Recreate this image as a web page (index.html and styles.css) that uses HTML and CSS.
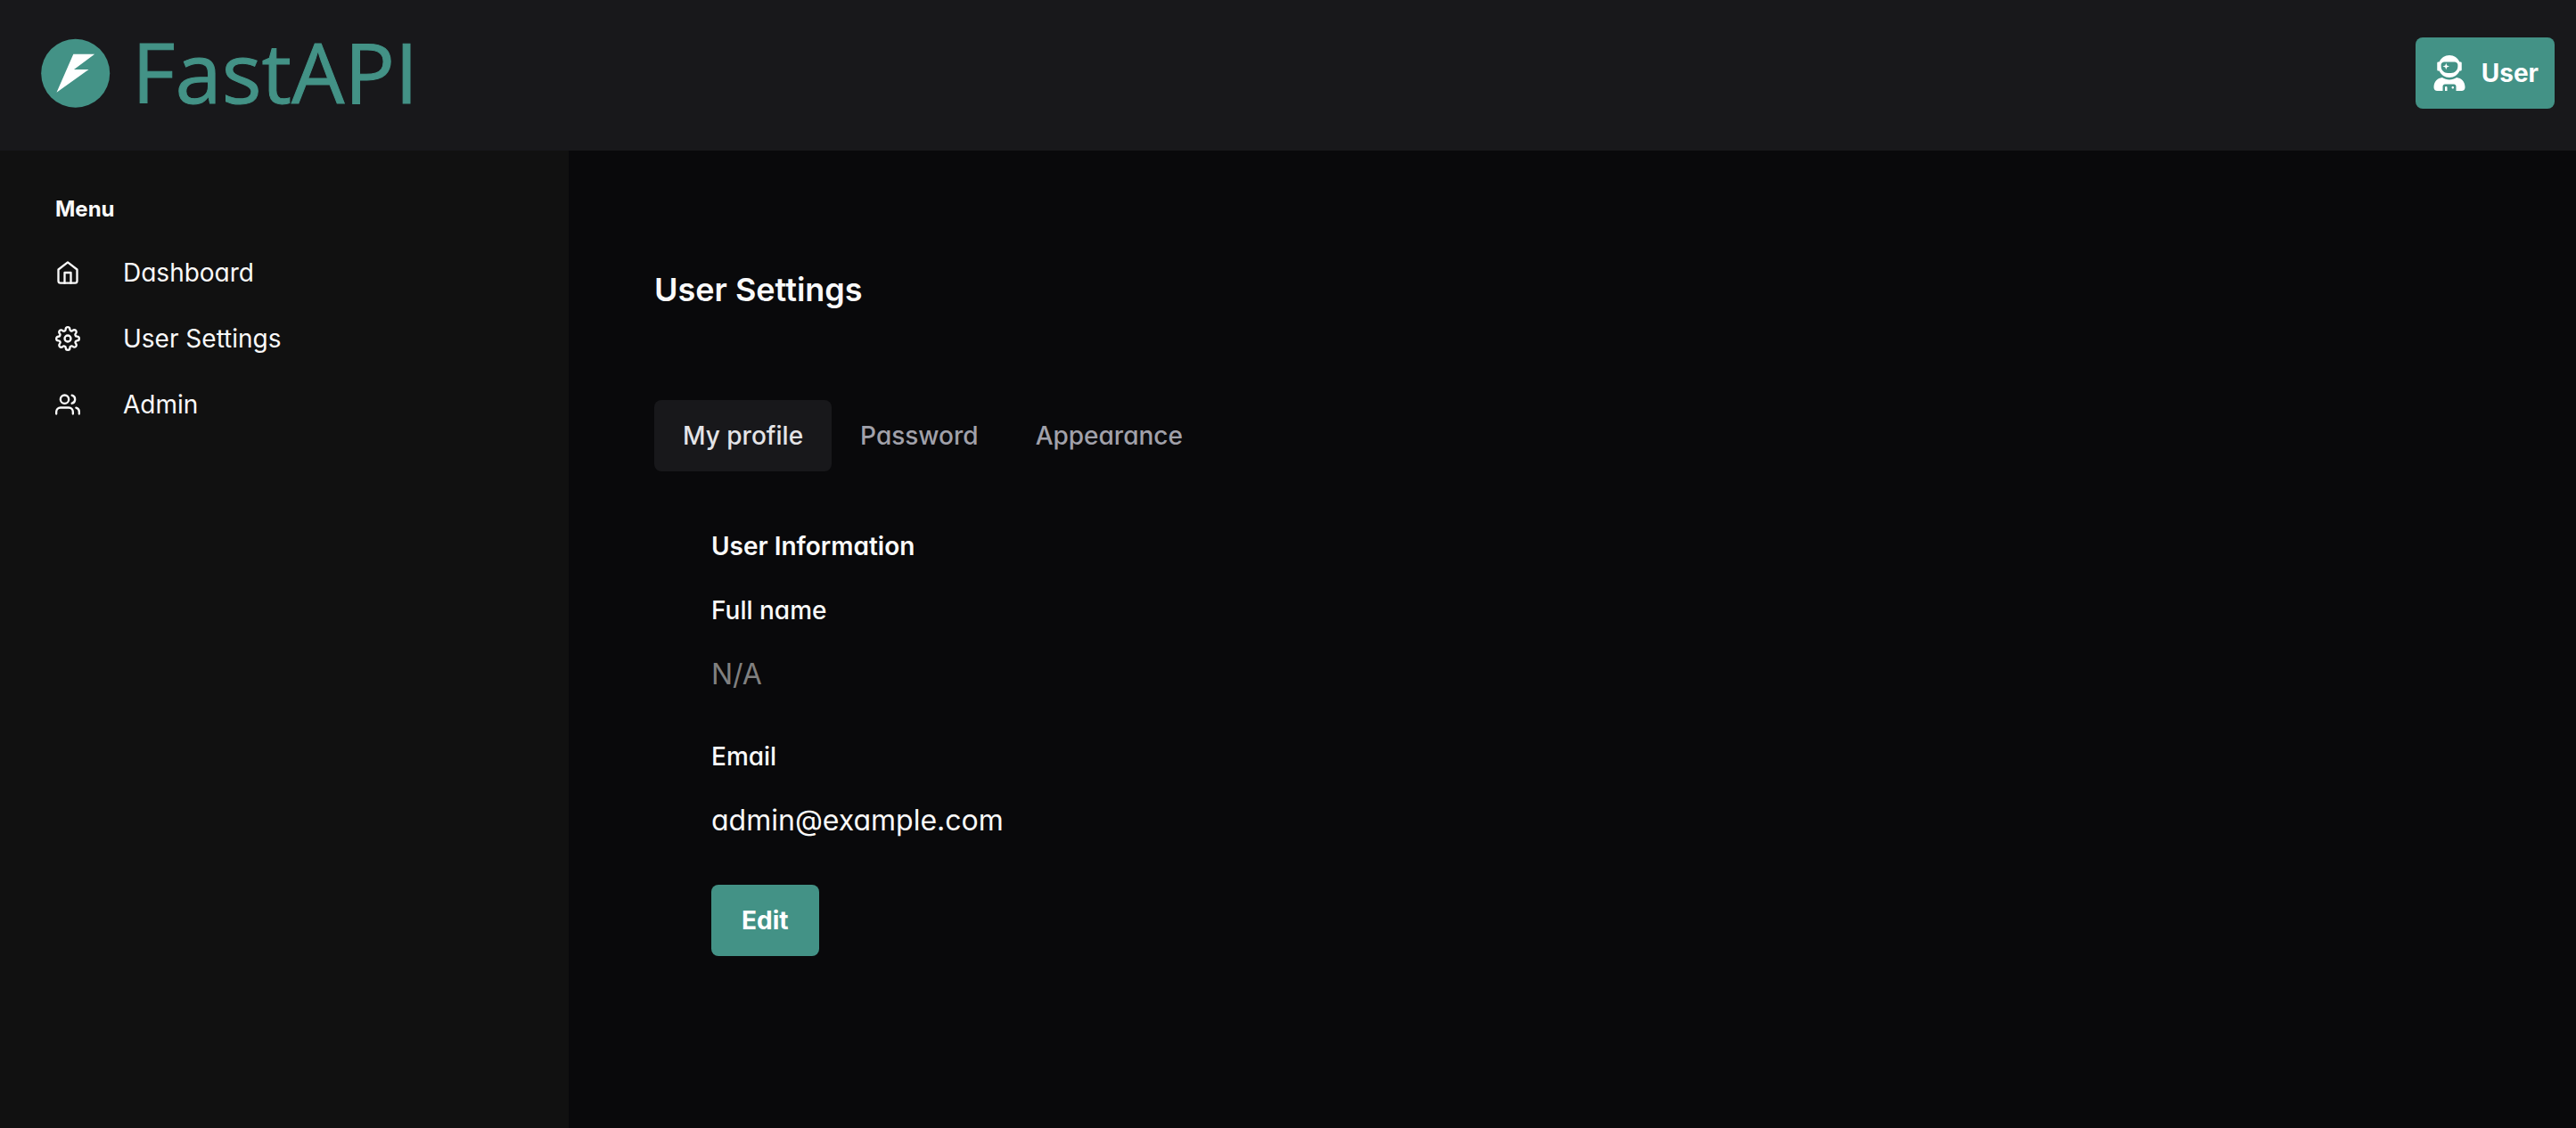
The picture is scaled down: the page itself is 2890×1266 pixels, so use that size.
FILE: index.html
```html
<!DOCTYPE html>
<html lang="en">
<head>
  <meta charset="utf-8">
  <meta name="viewport" content="width=device-width, initial-scale=1">
  <title>User Settings - FastAPI</title>
  <link rel="stylesheet" href="styles.css">
</head>
<body>
  <header class="topbar">
    <a class="logo" href="#">
      <svg class="logo-mark" viewBox="0 0 78 78" aria-hidden="true">
        <circle cx="38.7" cy="39.2" r="38.5" fill="#439286"/>
        <path d="M36.3 17.8H60.2L37 35H53.5L17.5 60.8Z" fill="#fff"/>
      </svg>
      <span class="logo-text">FastAPI</span>
    </a>
    <button class="button user-button" type="button">
      <svg class="user-icon" viewBox="0 0 448 512" fill="currentColor" aria-hidden="true">
        <path d="M64 224h13.5c24.7 56.5 80.9 96 146.500 96s121.800-39.500 146.500-96H384c8.800 0 16-7.200 16-16v-96c0-8.800-7.200-16-16-16h-13.500C345.800 39.500 289.600 0 224 0S102.200 39.500 77.500 96H64c-8.800 0-16 7.200-16 16v96c0 8.800 7.200 16 16 16zm40-88c0-22.100 21.500-40 48-40h144c26.500 0 48 17.900 48 40v24c0 53-43 96-96 96h-48c-53 0-96-43-96-96v-24zm72 72l12-36 36-12-36-12-12-36-12 36-36 12 36 12 12 36zm151.600 113.400C297.700 340.700 262.200 352 224 352s-73.700-11.300-103.600-30.600C52.900 328.500 0 385 0 454.400v9.600c0 26.500 21.500 48 48 48h80v-64c0-17.700 14.300-32 32-32h128c17.700 0 32 14.300 32 32v64h80c26.500 0 48-21.500 48-48v-9.600c0-69.400-52.900-125.900-120.400-133zM272 448c-8.800 0-16 7.200-16 16s7.200 16 16 16 16-7.200 16-16-7.200-16-16-16zm-96 0c-8.800 0-16 7.200-16 16v48h32v-48c0-8.800-7.200-16-16-16z"/>
      </svg>
      <span>User</span>
    </button>
  </header>

  <div class="layout">
    <aside class="sidebar">
      <h2 class="menu-title">Menu</h2>
      <nav class="menu">
        <a class="menu-link" href="#">
          <svg class="menu-icon" viewBox="0 0 24 24" aria-hidden="true"><path d="M3 9l9-7 9 7v11a2 2 0 0 1-2 2H5a2 2 0 0 1-2-2z"/><path d="M9 22V12h6v10"/></svg>
          <span>Dashboard</span>
        </a>
        <a class="menu-link" href="#">
          <svg class="menu-icon" viewBox="0 0 24 24" aria-hidden="true"><circle cx="12" cy="12" r="3"/><path d="M19.4 15a1.65 1.65 0 0 0 .33 1.82l.06.06a2 2 0 0 1 0 2.83 2 2 0 0 1-2.83 0l-.06-.06a1.65 1.65 0 0 0-1.82-.33 1.65 1.65 0 0 0-1 1.51V21a2 2 0 0 1-2 2 2 2 0 0 1-2-2v-.09A1.65 1.65 0 0 0 9 19.4a1.65 1.65 0 0 0-1.82.33l-.06.06a2 2 0 0 1-2.83 0 2 2 0 0 1 0-2.83l.06-.06a1.65 1.65 0 0 0 .33-1.82 1.65 1.65 0 0 0-1.51-1H3a2 2 0 0 1-2-2 2 2 0 0 1 2-2h.09A1.65 1.65 0 0 0 4.6 9a1.65 1.65 0 0 0-.33-1.82l-.06-.06a2 2 0 0 1 0-2.83 2 2 0 0 1 2.83 0l.06.06a1.65 1.65 0 0 0 1.82.33H9a1.65 1.65 0 0 0 1-1.51V3a2 2 0 0 1 2-2 2 2 0 0 1 2 2v.09a1.65 1.65 0 0 0 1 1.51 1.65 1.65 0 0 0 1.82-.33l.06-.06a2 2 0 0 1 2.83 0 2 2 0 0 1 0 2.83l-.06.06a1.65 1.65 0 0 0-.33 1.82V9a1.65 1.65 0 0 0 1.51 1H21a2 2 0 0 1 2 2 2 2 0 0 1-2 2h-.09a1.65 1.65 0 0 0-1.51 1z"/></svg>
          <span>User Settings</span>
        </a>
        <a class="menu-link" href="#">
          <svg class="menu-icon" viewBox="0 0 24 24" aria-hidden="true"><path d="M17 21v-2a4 4 0 0 0-4-4H5a4 4 0 0 0-4 4v2"/><circle cx="9" cy="7" r="4"/><path d="M23 21v-2a4 4 0 0 0-3-3.87"/><path d="M16 3.13a4 4 0 0 1 0 7.75"/></svg>
          <span>Admin</span>
        </a>
      </nav>
    </aside>

    <main class="content">
      <h1 class="page-title">User Settings</h1>
      <div class="tabs" role="tablist">
        <button class="tab tab-active" type="button" role="tab" id="tab-profile" aria-selected="true" aria-controls="panel-profile">My profile</button>
        <button class="tab" type="button" role="tab" aria-selected="false">Password</button>
        <button class="tab" type="button" role="tab" aria-selected="false">Appearance</button>
      </div>
      <section class="panel" id="panel-profile" role="tabpanel" aria-labelledby="tab-profile">
        <h2 class="panel-title">User Information</h2>
        <dl class="fields">
          <div class="field">
            <dt class="field-label">Full name</dt>
            <dd class="field-value field-empty">N/A</dd>
          </div>
          <div class="field">
            <dt class="field-label">Email</dt>
            <dd class="field-value">admin@example.com</dd>
          </div>
        </dl>
        <button class="button edit-button" type="button">Edit</button>
      </section>
    </main>
  </div>
</body>
</html>
```

FILE: styles.css
```css
* {
  box-sizing: border-box;
}

body {
  display: flex;
  flex-direction: column;
  min-height: 100vh;
  margin: 0;
  background: #09090b;
  color: #fafafa;
  font-family: Inter, "Liberation Sans", sans-serif;
  font-feature-settings: "cv11";
  font-size: 28px;
  line-height: 40px;
}

h1,
h2,
dl,
dd {
  margin: 0;
}

a {
  color: inherit;
  text-decoration: none;
}

button {
  border: 0;
  font: inherit;
  font-feature-settings: inherit;
  cursor: pointer;
}

.button {
  height: 80px;
  border-radius: 8px;
  background: #439286;
  color: #fff;
  font-weight: 700;
}

.topbar {
  display: flex;
  align-items: center;
  justify-content: space-between;
  height: 169px;
  padding: 0 24px 6px 46px;
  background: #18181b;
}

.logo {
  display: flex;
  align-items: center;
  gap: 24px;
  color: #439286;
}

.logo-mark {
  width: 78px;
  height: 78px;
}

.logo-text {
  padding-bottom: 4px;
  font-family: "Open Sans", "Noto Sans", sans-serif;
  font-size: 94px;
  line-height: 76px;
  -webkit-text-stroke: 1px currentColor;
}

.user-button {
  display: flex;
  align-items: center;
  gap: 16px;
  padding: 0 18px;
}

.user-icon {
  width: 40px;
  height: 40px;
}

.layout {
  display: flex;
  flex: 1;
}

.sidebar {
  flex: 0 0 638px;
  padding: 48px 62px;
  background: #111;
}

.menu-title {
  margin-bottom: 16px;
  font-size: 24px;
  font-weight: 700;
  line-height: 36px;
}

.menu-link {
  display: flex;
  align-items: center;
  gap: 48px;
  height: 74px;
}

.menu-icon {
  width: 28px;
  height: 28px;
  fill: none;
  stroke: currentColor;
  stroke-width: 2;
  stroke-linecap: round;
  stroke-linejoin: round;
}

.content {
  flex: 1;
  padding: 130px 96px 96px;
}

.page-title {
  margin-bottom: 98px;
  font-size: 36px;
  font-weight: 600;
  line-height: 52px;
}

.tabs {
  display: flex;
}

.tab {
  height: 80px;
  padding: 0 32px;
  border-radius: 8px;
  background: transparent;
  color: #a1a1aa;
  font-weight: 500;
}

.tab-active {
  background: #18181b;
  color: #e4e4e7;
}

.panel {
  padding: 64px;
}

.panel-title {
  margin-bottom: 32px;
  font-size: 28px;
  font-weight: 600;
}

.fields {
  display: grid;
  gap: 48px;
  margin-bottom: 48px;
}

.field {
  display: grid;
  gap: 28px;
}

.field-label {
  font-weight: 500;
}

.field-value {
  font-size: 32px;
  line-height: 48px;
}

.field-empty {
  color: #808080;
}

.edit-button {
  padding: 0 34px;
}
```
